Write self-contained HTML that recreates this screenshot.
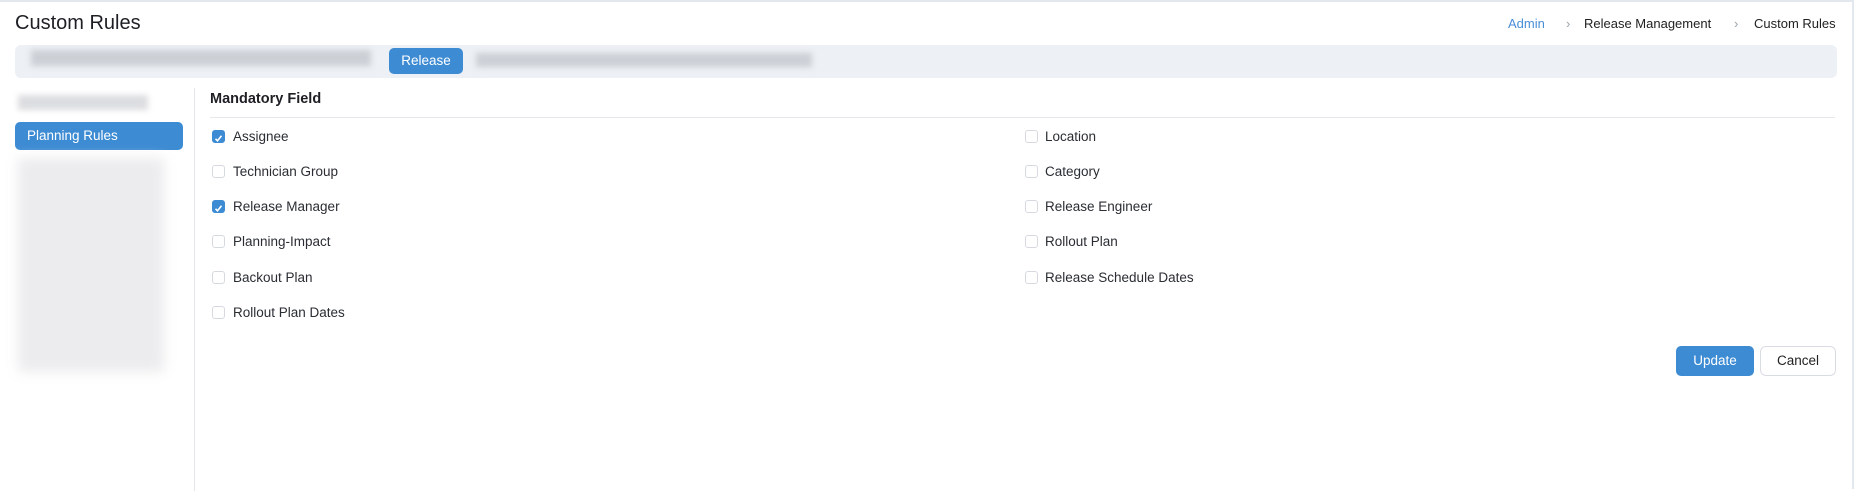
<!DOCTYPE html>
<html><head><meta charset="utf-8"><style>
*{box-sizing:border-box;margin:0;padding:0}
body{width:1854px;height:489px;background:#fff;font-family:"Liberation Sans",sans-serif;color:#222;position:relative;overflow:hidden;border-top:2px solid #e3e7ee;border-right:2px solid #e3e7ee}
.a{position:absolute;white-space:nowrap}
.title{left:15px;top:10px;font-size:20px;color:#1d1f24}
.bc{top:14px;font-size:13px;color:#222}
.bar{left:15px;top:43px;width:1822px;height:33px;background:#edf0f5;border-radius:6px}
.blur{background:#ccd0d5;filter:blur(3px)}
.btn{background:#3d8bd3;color:#fff;border-radius:5px;font-size:13.5px;text-align:center}
.cb{width:13px;height:13px;border:1px solid #d6dae0;border-radius:3px;background:#fff}
.cb.on{background:#3d8bd3;border-color:#3d8bd3}
.lbl{font-size:13.5px;color:#2a2d33}
</style></head><body>
<div class="a title">Custom Rules</div>
<div class="a bc" style="left:1508px;color:#4a8ed6">Admin</div>
<div class="a bc" style="left:1566px;color:#9aa3ad">›</div>
<div class="a bc" style="left:1584px">Release Management</div>
<div class="a bc" style="left:1734px;color:#9aa3ad">›</div>
<div class="a bc" style="left:1754px">Custom Rules</div>
<div class="a bar"></div>
<div class="a blur" style="left:31px;top:48px;width:340px;height:16px"></div>
<div class="a blur" style="left:476px;top:51px;width:336px;height:14px"></div>
<div class="a btn" style="left:389px;top:46px;width:74px;height:26px;line-height:26px">Release</div>
<div class="a blur" style="left:18px;top:93px;width:130px;height:15px;background:#dcdde0"></div>
<div class="a btn" style="left:15px;top:120px;width:168px;height:28px;line-height:28px;text-align:left;padding-left:12px">Planning Rules</div>
<div class="a blur" style="left:18px;top:156px;width:146px;height:214px;background:#ececee;filter:blur(6px)"></div>
<div class="a" style="left:194px;top:86px;width:1px;height:403px;background:#e3e6ea"></div>
<div class="a" style="left:210px;top:89px;font-size:14.5px;font-weight:bold;color:#1d1f24">Mandatory Field</div>
<div class="a" style="left:210px;top:115px;width:1625px;height:1px;background:#e6e8ec"></div>

<div class="a cb on" style="left:212px;top:128px"><svg width="11" height="11" viewBox="0 0 11 11"><path d="M2.5 5.8l2 2 4-5" stroke="#fff" stroke-width="1.6" fill="none"/></svg></div>
<div class="a lbl" style="left:233px;top:127px">Assignee</div>
<div class="a cb" style="left:212px;top:163px"></div>
<div class="a lbl" style="left:233px;top:162px">Technician Group</div>
<div class="a cb on" style="left:212px;top:198px"><svg width="11" height="11" viewBox="0 0 11 11"><path d="M2.5 5.8l2 2 4-5" stroke="#fff" stroke-width="1.6" fill="none"/></svg></div>
<div class="a lbl" style="left:233px;top:197px">Release Manager</div>
<div class="a cb" style="left:212px;top:233px"></div>
<div class="a lbl" style="left:233px;top:232px">Planning-Impact</div>
<div class="a cb" style="left:212px;top:269px"></div>
<div class="a lbl" style="left:233px;top:268px">Backout Plan</div>
<div class="a cb" style="left:212px;top:304px"></div>
<div class="a lbl" style="left:233px;top:303px">Rollout Plan Dates</div>

<div class="a cb" style="left:1025px;top:128px"></div>
<div class="a lbl" style="left:1045px;top:127px">Location</div>
<div class="a cb" style="left:1025px;top:163px"></div>
<div class="a lbl" style="left:1045px;top:162px">Category</div>
<div class="a cb" style="left:1025px;top:198px"></div>
<div class="a lbl" style="left:1045px;top:197px">Release Engineer</div>
<div class="a cb" style="left:1025px;top:233px"></div>
<div class="a lbl" style="left:1045px;top:232px">Rollout Plan</div>
<div class="a cb" style="left:1025px;top:269px"></div>
<div class="a lbl" style="left:1045px;top:268px">Release Schedule Dates</div>

<div class="a btn" style="left:1676px;top:344px;width:78px;height:30px;line-height:30px">Update</div>
<div class="a" style="left:1760px;top:344px;width:76px;height:30px;line-height:28px;border:1px solid #d9dde3;border-radius:6px;text-align:center;font-size:13.5px;color:#222">Cancel</div>
</body></html>
